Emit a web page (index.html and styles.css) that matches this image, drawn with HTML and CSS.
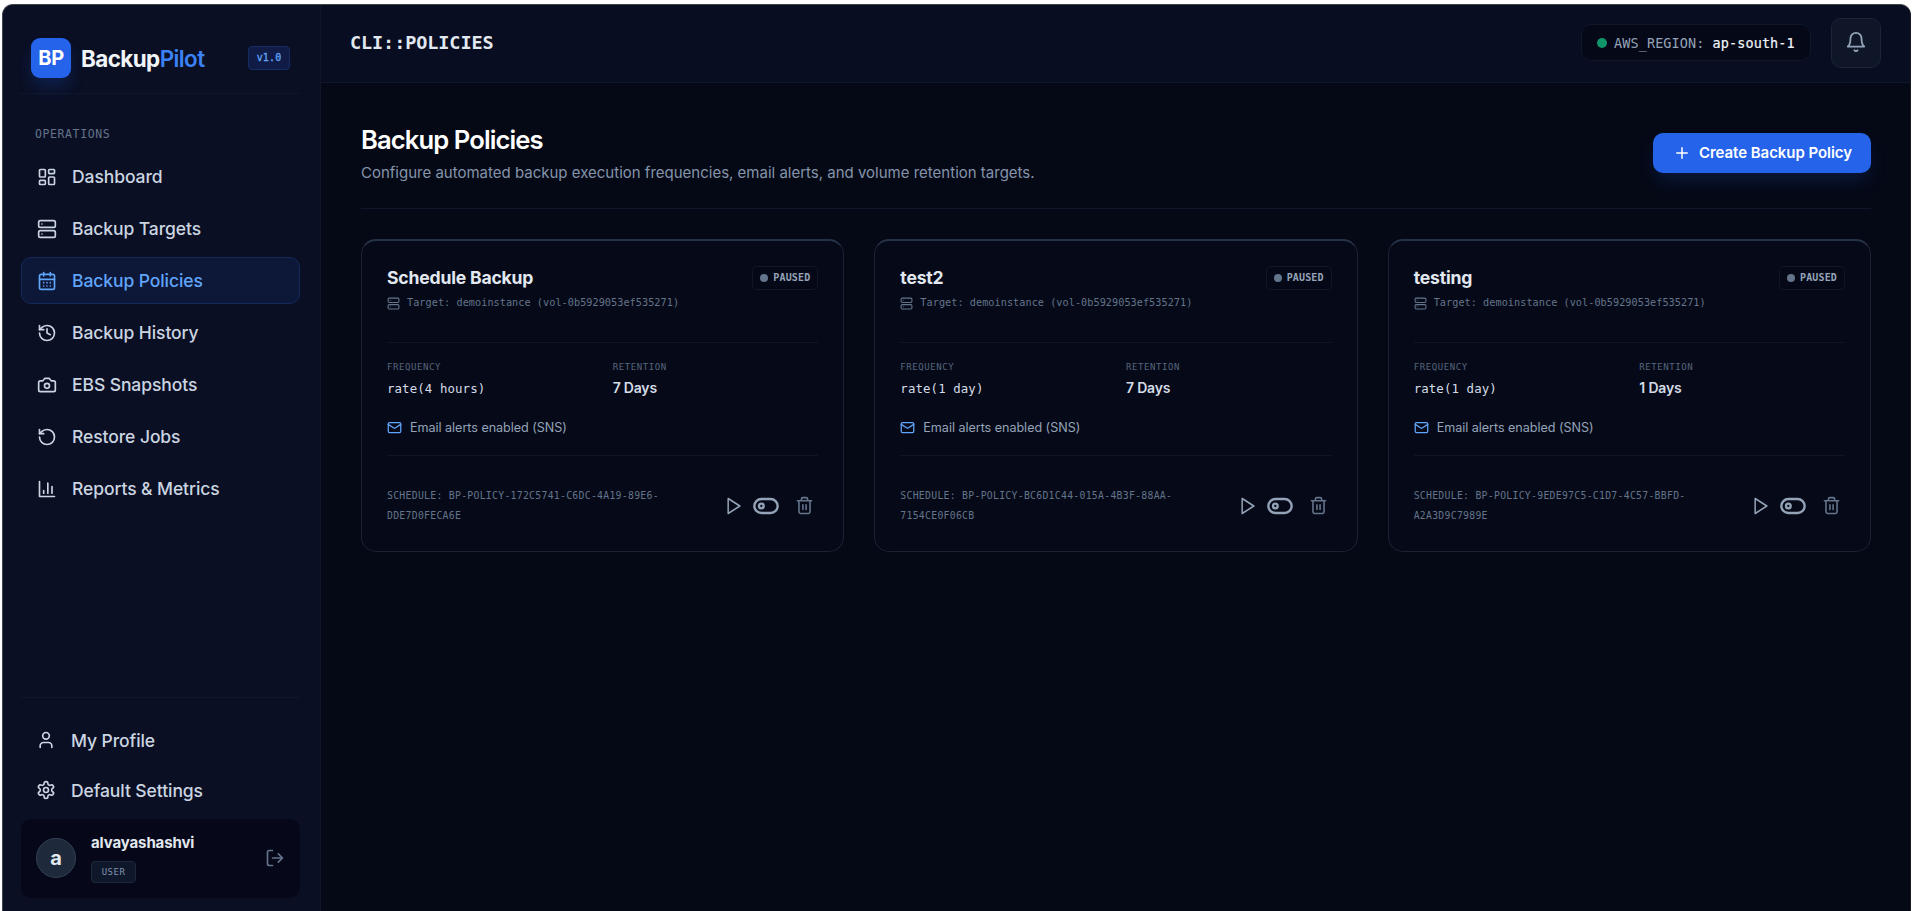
FILE: index.html
```html
<!DOCTYPE html>
<html lang="en">
<head>
<meta charset="utf-8">
<title>BackupPilot</title>
<link rel="stylesheet" href="styles.css">
</head>
<body>
<svg class="sprite" aria-hidden="true">
  <symbol id="dashboard" viewBox="0 0 24 24"><rect x="3" y="3" width="7" height="9" rx="1"/><rect x="14" y="3" width="7" height="5" rx="1"/><rect x="14" y="12" width="7" height="9" rx="1"/><rect x="3" y="16" width="7" height="5" rx="1"/></symbol>
  <symbol id="server" viewBox="0 0 24 24"><rect x="2" y="2" width="20" height="8" rx="2"/><rect x="2" y="14" width="20" height="8" rx="2"/><path d="M6 6h.01M6 18h.01"/></symbol>
  <symbol id="calendar" viewBox="0 0 24 24"><path d="M8 2v4M16 2v4M3 10h18"/><rect x="3" y="4" width="18" height="18" rx="2"/><path d="M8 14h.01M12 14h.01M16 14h.01M8 18h.01M12 18h.01M16 18h.01"/></symbol>
  <symbol id="history" viewBox="0 0 24 24"><path d="M3 12a9 9 0 1 0 9-9 9.75 9.75 0 0 0-6.74 2.74L3 8"/><path d="M3 3v5h5M12 7v5l4 2"/></symbol>
  <symbol id="camera" viewBox="0 0 24 24"><path d="M14.5 4h-5L7 7H4a2 2 0 0 0-2 2v9a2 2 0 0 0 2 2h16a2 2 0 0 0 2-2V9a2 2 0 0 0-2-2h-3l-2.5-3z"/><circle cx="12" cy="13" r="3"/></symbol>
  <symbol id="restore" viewBox="0 0 24 24"><path d="M3 12a9 9 0 1 0 9-9 9.75 9.75 0 0 0-6.74 2.74L3 8"/><path d="M3 3v5h5"/></symbol>
  <symbol id="chart" viewBox="0 0 24 24"><path d="M3 3v18h18M18 17V9M13 17V5M8 17v-3"/></symbol>
  <symbol id="user" viewBox="0 0 24 24"><path d="M19 21v-2a4 4 0 0 0-4-4H9a4 4 0 0 0-4 4v2"/><circle cx="12" cy="7" r="4"/></symbol>
  <symbol id="gear" viewBox="0 0 24 24"><path d="M12.22 2h-.44a2 2 0 0 0-2 2v.18a2 2 0 0 1-1 1.73l-.43.25a2 2 0 0 1-2 0l-.15-.08a2 2 0 0 0-2.73.73l-.22.38a2 2 0 0 0 .73 2.73l.15.1a2 2 0 0 1 1 1.72v.51a2 2 0 0 1-1 1.74l-.15.09a2 2 0 0 0-.73 2.73l.22.38a2 2 0 0 0 2.73.73l.15-.08a2 2 0 0 1 2 0l.43.25a2 2 0 0 1 1 1.73V20a2 2 0 0 0 2 2h.44a2 2 0 0 0 2-2v-.18a2 2 0 0 1 1-1.73l.43-.25a2 2 0 0 1 2 0l.15.08a2 2 0 0 0 2.73-.73l.22-.39a2 2 0 0 0-.73-2.73l-.15-.08a2 2 0 0 1-1-1.74v-.5a2 2 0 0 1 1-1.74l.15-.09a2 2 0 0 0 .73-2.73l-.22-.38a2 2 0 0 0-2.73-.73l-.15.08a2 2 0 0 1-2 0l-.43-.25a2 2 0 0 1-1-1.73V4a2 2 0 0 0-2-2z"/><circle cx="12" cy="12" r="3"/></symbol>
  <symbol id="logout" viewBox="0 0 24 24"><path d="M9 21H5a2 2 0 0 1-2-2V5a2 2 0 0 1 2-2h4M16 17l5-5-5-5M21 12H9"/></symbol>
  <symbol id="bell" viewBox="0 0 24 24"><path d="M6 8a6 6 0 0 1 12 0c0 7 3 9 3 9H3s3-2 3-9M10.3 21a1.94 1.94 0 0 0 3.4 0"/></symbol>
  <symbol id="plus" viewBox="0 0 24 24"><path d="M5 12h14M12 5v14"/></symbol>
  <symbol id="mail" viewBox="0 0 24 24"><rect x="2" y="4" width="20" height="16" rx="2"/><path d="m22 7-8.97 5.7a1.94 1.94 0 0 1-2.06 0L2 7"/></symbol>
  <symbol id="play" viewBox="0 0 24 24"><path d="M5 3l14 9-14 9z"/></symbol>
  <symbol id="toggle" viewBox="0 0 24 24"><rect x="2" y="6" width="20" height="12" rx="6"/><circle cx="8" cy="12" r="2"/></symbol>
  <symbol id="trash" viewBox="0 0 24 24"><path d="M3 6h18M19 6v14a2 2 0 0 1-2 2H7a2 2 0 0 1-2-2V6M8 6V4a2 2 0 0 1 2-2h4a2 2 0 0 1 2 2v2M10 11v6M14 11v6"/></symbol>
</svg>
<div class="window">
  <aside class="sidebar">
    <div class="brand">
      <div class="logo">BP</div>
      <div class="wordmark">Backup<span>Pilot</span></div>
      <div class="version">v1.0</div>
    </div>
    <div class="section-label">OPERATIONS</div>
    <nav class="nav">
      <a class="nav-item"><svg class="icon"><use href="#dashboard"/></svg>Dashboard</a>
      <a class="nav-item"><svg class="icon"><use href="#server"/></svg>Backup Targets</a>
      <a class="nav-item active"><svg class="icon"><use href="#calendar"/></svg>Backup Policies</a>
      <a class="nav-item"><svg class="icon"><use href="#history"/></svg>Backup History</a>
      <a class="nav-item"><svg class="icon"><use href="#camera"/></svg>EBS Snapshots</a>
      <a class="nav-item"><svg class="icon"><use href="#restore"/></svg>Restore Jobs</a>
      <a class="nav-item"><svg class="icon"><use href="#chart"/></svg>Reports &amp; Metrics</a>
    </nav>
    <div class="account">
      <a class="account-link"><svg class="icon"><use href="#user"/></svg>My Profile</a>
      <a class="account-link"><svg class="icon"><use href="#gear"/></svg>Default Settings</a>
      <div class="user-card">
        <div class="avatar">a</div>
        <div class="user-info"><div class="user-name">alvayashashvi</div><div class="role">USER</div></div>
        <svg class="icon logout"><use href="#logout"/></svg>
      </div>
    </div>
  </aside>
  <div class="content">
    <header class="topbar">
      <div class="crumb">CLI::POLICIES</div>
      <div class="region"><i class="online"></i><span class="region-key">AWS_REGION:</span><span class="region-value">ap-south-1</span></div>
      <div class="bell"><svg class="icon"><use href="#bell"/></svg></div>
    </header>
    <main class="main">
      <div class="page-head">
        <div>
          <h1 class="title">Backup Policies</h1>
          <p class="subtitle">Configure automated backup execution frequencies, email alerts, and volume retention targets.</p>
        </div>
        <div class="create"><svg class="icon"><use href="#plus"/></svg><span>Create Backup Policy</span></div>
      </div>
      <div class="cards">
        <article class="card">
          <div class="card-head"><h2 class="card-title">Schedule Backup</h2><div class="badge"><i></i><span>PAUSED</span></div></div>
          <div class="target"><svg class="icon"><use href="#server"/></svg><span>Target: demoinstance (vol-0b5929053ef535271)</span></div>
          <div class="details">
            <div><div class="label">FREQUENCY</div><div class="rate">rate(4 hours)</div></div>
            <div><div class="label">RETENTION</div><div class="days">7 Days</div></div>
          </div>
          <div class="email"><svg class="icon"><use href="#mail"/></svg><span>Email alerts enabled (SNS)</span></div>
          <div class="card-foot">
            <div class="schedule">SCHEDULE: BP-POLICY-172C5741-C6DC-4A19-89E6-<br>DDE7D0FECA6E</div>
            <div class="actions"><svg class="icon play"><use href="#play"/></svg><svg class="icon toggle"><use href="#toggle"/></svg><svg class="icon trash"><use href="#trash"/></svg></div>
          </div>
        </article>
        <article class="card">
          <div class="card-head"><h2 class="card-title">test2</h2><div class="badge"><i></i><span>PAUSED</span></div></div>
          <div class="target"><svg class="icon"><use href="#server"/></svg><span>Target: demoinstance (vol-0b5929053ef535271)</span></div>
          <div class="details">
            <div><div class="label">FREQUENCY</div><div class="rate">rate(1 day)</div></div>
            <div><div class="label">RETENTION</div><div class="days">7 Days</div></div>
          </div>
          <div class="email"><svg class="icon"><use href="#mail"/></svg><span>Email alerts enabled (SNS)</span></div>
          <div class="card-foot">
            <div class="schedule">SCHEDULE: BP-POLICY-BC6D1C44-015A-4B3F-88AA-<br>7154CE0F06CB</div>
            <div class="actions"><svg class="icon play"><use href="#play"/></svg><svg class="icon toggle"><use href="#toggle"/></svg><svg class="icon trash"><use href="#trash"/></svg></div>
          </div>
        </article>
        <article class="card">
          <div class="card-head"><h2 class="card-title">testing</h2><div class="badge"><i></i><span>PAUSED</span></div></div>
          <div class="target"><svg class="icon"><use href="#server"/></svg><span>Target: demoinstance (vol-0b5929053ef535271)</span></div>
          <div class="details">
            <div><div class="label">FREQUENCY</div><div class="rate">rate(1 day)</div></div>
            <div><div class="label">RETENTION</div><div class="days">1 Days</div></div>
          </div>
          <div class="email"><svg class="icon"><use href="#mail"/></svg><span>Email alerts enabled (SNS)</span></div>
          <div class="card-foot">
            <div class="schedule">SCHEDULE: BP-POLICY-9EDE97C5-C1D7-4C57-BBFD-<br>A2A3D9C7989E</div>
            <div class="actions"><svg class="icon play"><use href="#play"/></svg><svg class="icon toggle"><use href="#toggle"/></svg><svg class="icon trash"><use href="#trash"/></svg></div>
          </div>
        </article>
      </div>
    </main>
  </div>
</div>
</body>
</html>
```
FILE: styles.css
```css
* { box-sizing: border-box; }
html, body { margin: 0; height: 100%; }
body {
  background: #fff;
  padding: 4px 2px 0;
  overflow: hidden;
  font-family: Inter, "Liberation Sans", sans-serif;
  color: #cbd5e1;
  white-space: nowrap;
}
.sprite { position: absolute; width: 0; height: 0; }
.icon {
  width: 20px; height: 20px; flex: none; display: block;
  fill: none; stroke: currentColor; stroke-width: 2;
  stroke-linecap: round; stroke-linejoin: round;
}
.window {
  display: flex;
  height: 907px;
  border: 1px solid #41444f;
  border-right-color: #181b26;
  border-bottom: 0;
  border-radius: 11px 11px 0 0;
  background: #050916;
  overflow: hidden;
}

/* Sidebar */
.sidebar {
  width: 318px; flex: none;
  display: flex; flex-direction: column;
  padding: 0 20px 13px 18px;
  background: #0a0f24;
  border-right: 1px solid #0e172a;
}
.brand {
  display: flex; align-items: center;
  height: 89px; padding: 15px 10px 0;
  border-bottom: 1px solid #0f172a;
  margin-bottom: 29px;
}
.logo {
  width: 40px; height: 40px; border-radius: 9px;
  margin-top: 2px;
  display: grid; place-items: center;
  background: #2563eb; color: #fff;
  font-size: 20px; font-weight: 700; letter-spacing: -0.3px;
  box-shadow: 0 10px 16px -2px rgba(37, 99, 235, .22);
}
.wordmark { margin: 4px 0 0 10px; font-size: 22.4px; font-weight: 700; letter-spacing: -0.57px; color: #f1f5f9; }
.wordmark span { color: #3b82f6; font-weight: 600; }
.version {
  margin: 2px 0 0 auto;
  width: 42px; height: 24px; border-radius: 4px;
  display: grid; place-items: center;
  background: #101c45; border: 1px solid #172c64; color: #60a5fa;
  font: 10px/1 "DejaVu Sans Mono", monospace; letter-spacing: .15px;
  -webkit-text-stroke: .3px #60a5fa;
}
.section-label {
  padding-left: 14px; height: 22px; margin-bottom: 8px;
  font: 11.5px/22px "DejaVu Sans Mono", monospace; letter-spacing: .6px; color: #64748b;
}
.nav { display: flex; flex-direction: column; gap: 5px; }
.nav-item {
  display: flex; align-items: center; gap: 15px;
  height: 47px; padding: 0 15px;
  border: 1px solid transparent; border-radius: 10px;
  font-size: 17.5px; font-weight: 500; letter-spacing: -.08px;
}
.nav-item.active { background: #0d1839; border-color: #15295a; color: #60a5fa; }
.account { margin-top: auto; padding-top: 17px; border-top: 1px solid #0f172a; }
.account-link { display: flex; align-items: center; gap: 15px; height: 50px; padding-left: 15px; font-size: 17.5px; font-weight: 500; letter-spacing: -.08px; }
.user-card {
  height: 79px; margin-top: 4px; padding: 0 15px 2px;
  display: flex; align-items: center;
  border-radius: 10px; background: #06081a;
}
.avatar {
  width: 40px; height: 40px; border-radius: 50%;
  display: grid; place-items: center;
  background: #1e293b; border: 1px solid #334155;
  color: #e2e8f0; font-size: 20px; font-weight: 700;
}
.user-info { margin: 1px 0 0 15px; }
.user-name { font-size: 15px; line-height: 20px; font-weight: 700; letter-spacing: -.12px; color: #e2e8f0; margin-bottom: 8px; }
.role {
  width: 45px; height: 22px; border-radius: 4px;
  display: grid; place-items: center;
  background: #0f172a; border: 1px solid #1e293b; color: #7f93b0;
  font: 9px/1 "DejaVu Sans Mono", monospace; letter-spacing: .5px;
}
.logout { margin-left: auto; color: #64748b; }

/* Header */
.content { flex: 1; min-width: 0; }
.topbar {
  display: flex; align-items: center;
  height: 78px; padding: 0 29px 0 29px;
  background: #080d22; border-bottom: 1px solid #0f172a;
}
.crumb { margin-top: -2px; font: 700 18.5px/24px "DejaVu Sans Mono", monospace; letter-spacing: -.1px; color: #e2e8f0; }
.region {
  display: flex; align-items: center;
  width: 230px; height: 37px; margin: -2px 20px 0 auto; padding-left: 15px;
  background: #050817; border: 1px solid #0f172a; border-radius: 10px;
  font: 13.5px/20px "DejaVu Sans Mono", monospace; letter-spacing: .1px;
}
.online { width: 10px; height: 10px; border-radius: 50%; background: #10946a; margin-right: 7px; }
.region-key { color: #94a3b8; margin-right: 8px; }
.region-value { color: #f1f5f9; -webkit-text-stroke: .2px #f1f5f9; }
.bell {
  width: 50px; height: 50px; border-radius: 10px; margin-top: -2px;
  display: grid; place-items: center;
  background: #0e1628; border: 1px solid #1b2537; color: #94a3b8;
}
.bell .icon { width: 22px; height: 22px; margin-top: -2px; }

/* Page */
.main { padding: 39px 39px 0 40px; }
.page-head {
  display: flex; justify-content: space-between;
  height: 87px; border-bottom: 1px solid #0f172a; margin-bottom: 30px;
}
.title { margin: 0; font-size: 25.6px; line-height: 36px; font-weight: 600; letter-spacing: -0.9px; color: #fff; }
.subtitle { margin: 5px 0 0; font-size: 15px; line-height: 20px; color: #8494ab; }
.create {
  display: flex; align-items: center; gap: 8px;
  width: 218px; height: 40px; margin-top: 11px; padding: 0 0 1px 20px;
  border-radius: 10px; background: #2563eb; color: #fff;
  font-size: 15px; font-weight: 600; letter-spacing: -.05px;
  box-shadow: 0 10px 20px -4px rgba(37, 99, 235, .2);
}
.create .icon { width: 18px; height: 18px; }

/* Policy cards */
.cards { display: grid; grid-template-columns: repeat(3, 1fr); gap: 30px; }
.card {
  height: 313px; padding: 25px 25px 0;
  background: #060a18; border: 1px solid #1a2235; border-top: 2px solid #263347;
  border-radius: 15px;
}
.card-head { display: flex; justify-content: space-between; height: 28px; }
.card-title { margin: -1px 0 0; font-size: 17.6px; line-height: 26px; font-weight: 700; letter-spacing: -.2px; color: #e2e8f0; }
.badge {
  display: flex; align-items: center; gap: 5px;
  width: 66px; height: 24px; padding-left: 7px;
  border: 1px solid #0f172a; border-radius: 5px; background: #050817;
  font: 700 10px/1 "DejaVu Sans Mono", monospace; letter-spacing: .15px; color: #94a3b8;
}
.badge i { width: 8px; height: 8px; border-radius: 50%; background: #64748b; }
.target {
  display: flex; align-items: center; gap: 8px;
  height: 17px; margin-bottom: 31px;
  font: 10.2px/17px "DejaVu Sans Mono", monospace; letter-spacing: .05px; color: #64748b;
}
.target .icon { width: 13px; height: 13px; margin: 1px -1px 0 0; }
.details {
  display: grid; grid-template-columns: 1fr 1fr; column-gap: 20px;
  height: 70px; padding-top: 15px; border-top: 1px solid #0e1528;
}
.label { font: 9px/18px "DejaVu Sans Mono", monospace; letter-spacing: .58px; color: #56657d; }
.rate, .days { height: 24px; line-height: 24px; color: #d4dce7; }
.rate { padding-top: 1px; font: 12.4px/24px "DejaVu Sans Mono", monospace; letter-spacing: .1px; }
.days { font-size: 14px; font-weight: 600; letter-spacing: -.2px; }
.email {
  display: flex; align-items: center; gap: 8px;
  height: 44px; padding-bottom: 12px; font-size: 12.6px; letter-spacing: -.04px; color: #94a3b8;
  border-bottom: 1px solid #0e1528;
}
.email .icon { width: 15px; height: 15px; color: #60a5fa; }
.card-foot { display: flex; align-items: center; justify-content: space-between; padding-top: 30px; }
.schedule { font: 9.8px/20px "DejaVu Sans Mono", monospace; letter-spacing: .28px; color: #64748b; }
.actions { display: flex; align-items: center; margin: -1px 4px 0 0; }
.play { width: 20px; height: 20px; color: #94a3b8; stroke-width: 1.8; }
.toggle { width: 28px; height: 28px; margin-left: 8px; color: #94a3b8; }
.trash { width: 19px; height: 19px; margin-left: 15px; color: #64748b; }
```
